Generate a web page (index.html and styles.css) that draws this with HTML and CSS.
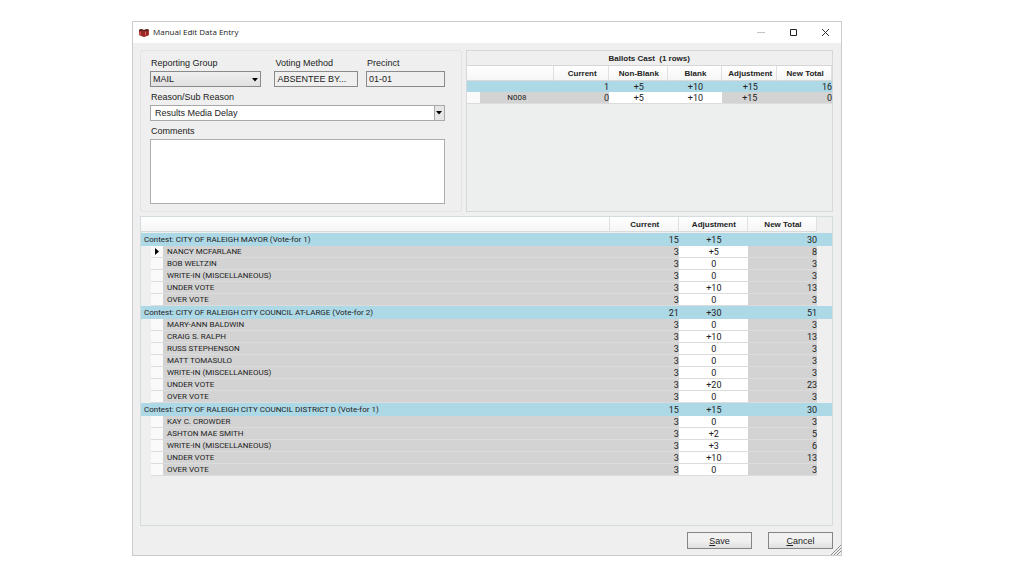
FILE: index.html
```html
<!DOCTYPE html>
<html lang="en">
<head>
<meta charset="utf-8">
<title>Manual Edit Data Entry</title>
<link rel="stylesheet" href="styles.css">
</head>
<body>
<main class="window">
  <header class="titlebar">
    <svg class="app-icon" width="10" height="9" viewBox="0 0 10 9" aria-hidden="true">
      <path d="M0 2l2-1 3 1 3-1 2 1v5l-2 1-3 1-3-1-2-1z" fill="#b5302f"/>
      <path d="M0 2l2-1 3 1 3-1 2 1v1H0z" fill="#4d2a28"/>
      <path d="M3 2v6M5 2v7M8 2v6" stroke="#7a2020" stroke-width="1"/>
      <path d="M1 4v3M6.500 4v3" stroke="#e0605a" stroke-width="1"/>
    </svg>
    <h1 class="title">Manual Edit Data Entry</h1>
    <button class="win-btn" aria-label="Minimize"><svg width="10" height="10" viewBox="0 0 10 10"><path d="M1 4.500h8" stroke="#c4c4c4" fill="none"/></svg></button>
    <button class="win-btn" aria-label="Maximize"><svg width="10" height="10" viewBox="0 0 10 10"><path d="M2.500 1.500h6v6h-6z" stroke="#222" fill="none"/></svg></button>
    <button class="win-btn" aria-label="Close"><svg width="10" height="10" viewBox="0 0 10 10"><path d="M2 1l7 7M9 1l-7 7" stroke="#333" fill="none"/></svg></button>
  </header>

  <div class="content">
    <div class="top">
      <form class="details">
        <div class="fields">
          <div class="field field-group">
            <label for="group">Reporting Group</label>
            <div class="combo">
              <select id="group" class="box box-raised"><option>MAIL</option></select>
              <svg class="arrow" width="6" height="4" viewBox="0 0 6 4" aria-hidden="true"><path d="M0 0h6L3 3.500z"/></svg>
            </div>
          </div>
          <div class="field field-method">
            <label for="method">Voting Method</label>
            <input id="method" class="box" type="text" value="ABSENTEE BY..." readonly>
          </div>
          <div class="field field-precinct">
            <label for="precinct">Precinct</label>
            <input id="precinct" class="box" type="text" value="01-01" readonly>
          </div>
        </div>
        <div class="field">
          <label for="reason">Reason/Sub Reason</label>
          <div class="combo">
            <select id="reason" class="box box-white"><option>Results Media Delay</option></select>
            <span class="drop"><svg width="6" height="4" viewBox="0 0 6 4" aria-hidden="true"><path d="M0 0h6L3 3.500z"/></svg></span>
          </div>
        </div>
        <div class="field field-comments">
          <label for="comments">Comments</label>
          <textarea id="comments" class="comments"></textarea>
        </div>
      </form>

      <section class="ballots">
        <table class="grid">
          <caption>Ballots Cast&nbsp; (1 rows)</caption>
          <colgroup><col class="c-mark"><col><col class="c-mid"><col class="c-mid-wide"><col class="c-mid"><col class="c-mid"><col class="c-mid"></colgroup>
          <thead><tr><th colspan="2"></th><th>Current</th><th>Non-Blank</th><th>Blank</th><th>Adjustment</th><th>New Total</th></tr></thead>
          <tbody>
            <tr class="sum"><td colspan="2"></td><td class="num">1</td><td class="mid">+5</td><td class="mid">+10</td><td class="mid">+15</td><td class="num">16</td></tr>
            <tr><td class="mark"></td><td class="precinct">N008</td><td class="num">0</td><td class="edit"><input aria-label="N008 non-blank" value="+5"></td><td class="edit"><input aria-label="N008 blank" value="+10"></td><td class="mid">+15</td><td class="num">0</td></tr>
          </tbody>
        </table>
      </section>
    </div>

    <section class="contests">
      <table class="grid">
        <colgroup><col class="c-indent"><col class="c-row"><col><col class="c-wide"><col class="c-wide"><col class="c-wide"><col class="c-tail"></colgroup>
        <thead><tr><th colspan="3"></th><th>Current</th><th>Adjustment</th><th>New Total</th><td class="blank"></td></tr></thead>
        <tbody>
          <tr class="sum"><th colspan="3" scope="rowgroup">Contest: CITY OF RALEIGH MAYOR (Vote-for 1)</th><td class="num">15</td><td class="mid">+15</td><td class="num">30</td><td></td></tr>
          <tr><td class="blank"></td><td class="mark"><svg width="4" height="7" viewBox="0 0 4 7" aria-hidden="true"><path d="M0 0l4 3.500L0 7z"/></svg></td><td>NANCY MCFARLANE</td><td class="num">3</td><td class="edit"><input aria-label="Nancy McFarlane adjustment" value="+5"></td><td class="num">8</td><td class="blank"></td></tr>
          <tr><td class="blank"></td><td class="mark"></td><td>BOB WELTZIN</td><td class="num">3</td><td class="edit"><input aria-label="Bob Weltzin adjustment" value="0"></td><td class="num">3</td><td class="blank"></td></tr>
          <tr><td class="blank"></td><td class="mark"></td><td>WRITE-IN (MISCELLANEOUS)</td><td class="num">3</td><td class="edit"><input aria-label="Mayor write-in adjustment" value="0"></td><td class="num">3</td><td class="blank"></td></tr>
          <tr><td class="blank"></td><td class="mark"></td><td>UNDER VOTE</td><td class="num">3</td><td class="edit"><input aria-label="Mayor under vote adjustment" value="+10"></td><td class="num">13</td><td class="blank"></td></tr>
          <tr><td class="blank"></td><td class="mark"></td><td>OVER VOTE</td><td class="num">3</td><td class="edit"><input aria-label="Mayor over vote adjustment" value="0"></td><td class="num">3</td><td class="blank"></td></tr>
        </tbody>
        <tbody>
          <tr class="sum"><th colspan="3" scope="rowgroup">Contest: CITY OF RALEIGH CITY COUNCIL AT-LARGE (Vote-for 2)</th><td class="num">21</td><td class="mid">+30</td><td class="num">51</td><td></td></tr>
          <tr><td class="blank"></td><td class="mark"></td><td>MARY-ANN BALDWIN</td><td class="num">3</td><td class="edit"><input aria-label="Mary-Ann Baldwin adjustment" value="0"></td><td class="num">3</td><td class="blank"></td></tr>
          <tr><td class="blank"></td><td class="mark"></td><td>CRAIG S. RALPH</td><td class="num">3</td><td class="edit"><input aria-label="Craig S. Ralph adjustment" value="+10"></td><td class="num">13</td><td class="blank"></td></tr>
          <tr><td class="blank"></td><td class="mark"></td><td>RUSS STEPHENSON</td><td class="num">3</td><td class="edit"><input aria-label="Russ Stephenson adjustment" value="0"></td><td class="num">3</td><td class="blank"></td></tr>
          <tr><td class="blank"></td><td class="mark"></td><td>MATT TOMASULO</td><td class="num">3</td><td class="edit"><input aria-label="Matt Tomasulo adjustment" value="0"></td><td class="num">3</td><td class="blank"></td></tr>
          <tr><td class="blank"></td><td class="mark"></td><td>WRITE-IN (MISCELLANEOUS)</td><td class="num">3</td><td class="edit"><input aria-label="At-large write-in adjustment" value="0"></td><td class="num">3</td><td class="blank"></td></tr>
          <tr><td class="blank"></td><td class="mark"></td><td>UNDER VOTE</td><td class="num">3</td><td class="edit"><input aria-label="At-large under vote adjustment" value="+20"></td><td class="num">23</td><td class="blank"></td></tr>
          <tr><td class="blank"></td><td class="mark"></td><td>OVER VOTE</td><td class="num">3</td><td class="edit"><input aria-label="At-large over vote adjustment" value="0"></td><td class="num">3</td><td class="blank"></td></tr>
        </tbody>
        <tbody>
          <tr class="sum"><th colspan="3" scope="rowgroup">Contest: CITY OF RALEIGH CITY COUNCIL DISTRICT D (Vote-for 1)</th><td class="num">15</td><td class="mid">+15</td><td class="num">30</td><td></td></tr>
          <tr><td class="blank"></td><td class="mark"></td><td>KAY C. CROWDER</td><td class="num">3</td><td class="edit"><input aria-label="Kay C. Crowder adjustment" value="0"></td><td class="num">3</td><td class="blank"></td></tr>
          <tr><td class="blank"></td><td class="mark"></td><td>ASHTON MAE SMITH</td><td class="num">3</td><td class="edit"><input aria-label="Ashton Mae Smith adjustment" value="+2"></td><td class="num">5</td><td class="blank"></td></tr>
          <tr><td class="blank"></td><td class="mark"></td><td>WRITE-IN (MISCELLANEOUS)</td><td class="num">3</td><td class="edit"><input aria-label="District D write-in adjustment" value="+3"></td><td class="num">6</td><td class="blank"></td></tr>
          <tr><td class="blank"></td><td class="mark"></td><td>UNDER VOTE</td><td class="num">3</td><td class="edit"><input aria-label="District D under vote adjustment" value="+10"></td><td class="num">13</td><td class="blank"></td></tr>
          <tr><td class="blank"></td><td class="mark"></td><td>OVER VOTE</td><td class="num">3</td><td class="edit"><input aria-label="District D over vote adjustment" value="0"></td><td class="num">3</td><td class="blank"></td></tr>
        </tbody>
      </table>
    </section>

    <footer class="actions">
      <button class="btn"><u>S</u>ave</button>
      <button class="btn"><u>C</u>ancel</button>
    </footer>
  </div>
  <svg class="grip" width="10" height="10" viewBox="0 0 10 10" aria-hidden="true"><path d="M0 10L10 0M3 10l7-7M6 10l4-4" stroke="#8c8c8c" fill="none"/></svg>
</main>
</body>
</html>
```
FILE: styles.css
```css
* { box-sizing: border-box; }

body {
  margin: 0;
  min-height: 100vh;
  display: flex;
  padding: 21px 182px 20px 132px;
  background: #fff;
  color: #222;
  font: 9px/12px "Liberation Sans", Arial, sans-serif;
}

input, select, textarea, button { font: inherit; color: inherit; margin: 0; border-radius: 0; }

.window {
  position: relative;
  flex: 1;
  display: flex;
  flex-direction: column;
  min-width: 0;
  border: 1px solid #cbcbcb;
  background: #efefef;
}

.titlebar {
  display: flex;
  align-items: center;
  height: 21px;
  padding: 0 0 0 6px;
  background: #fff;
}
.title { flex: 1; margin: 0 0 0 4px; font: 8px/12px "Open Sans", "Noto Sans", sans-serif; padding-bottom: 1px; }
.win-btn { display: flex; justify-content: center; align-items: center; width: 32px; height: 20px; padding: 0; border: 0; background: none; }

.content { flex: 1; display: flex; flex-direction: column; padding: 7px 8px 6px 7px; }

.top { display: grid; grid-template-columns: 7fr 8fr; gap: 4px; height: 162px; margin-bottom: 4px; }

.details {
  min-width: 0;
  display: flex;
  flex-direction: column;
  gap: 4px;
  padding: 6px 16px 7px 9px;
  border: 1px solid #e0e4e4;
  border-radius: 3px;
}
.fields { display: flex; }
.field { display: flex; flex-direction: column; gap: 2px; min-width: 0; }
.field label { padding-left: 1px; line-height: 12px; }
.field-group { flex: 112; margin-right: 13px; }
.field-method { flex: 84; margin-right: 8px; }
.field-precinct { flex: 79; }
.field-comments { flex: 1; }

.box {
  width: 100%;
  height: 16px;
  padding: 0 2px;
  border: 1px solid #8a8a8a;
  background: #efefef;
  appearance: none;
  outline: 0;
}
.box-raised { background: linear-gradient(#efefef, #e0e0e0); }
.box-white { background: #fff; border-color: #a8a8a8; padding-left: 4px; }
.combo { position: relative; display: flex; }
.arrow { position: absolute; right: 3px; top: 7px; }
.drop {
  position: absolute;
  right: 1px;
  top: 1px;
  bottom: 1px;
  width: 10px;
  display: flex;
  justify-content: center;
  align-items: center;
  border-left: 1px solid #a8a8a8;
  background: #e6e6e6;
  pointer-events: none;
}
.comments { flex: 1; width: 100%; padding: 2px; border: 1px solid #adadad; background: #fff; resize: none; outline: 0; }

.ballots { min-width: 0; border: 1px solid #d5d9dc; background: #edeeee; }
.contests { flex: 1; border: 1px solid #d5dcdf; background: #efefef; }

.grid { width: 100%; table-layout: fixed; border-collapse: separate; border-spacing: 0; font-size: 8px; line-height: 11px; }
.grid caption { height: 15px; line-height: 15px; font-weight: bold; background: #efefef; border-bottom: 1px solid #d5d5d5; }
.grid th, .grid td { padding: 0; white-space: nowrap; }
.grid thead th { height: 15px; padding-left: 2px; border-right: 1px solid #e0e0e0; border-bottom: 1px solid #dadada; background: linear-gradient(#fff, #f6f6f6); }
.grid tbody { font-family: Roboto, "Liberation Sans", sans-serif; }
.grid tbody td { height: 12px; padding-left: 4px; border-bottom: 1px solid #dcdcdc; background: #d3d3d3; }
.grid tbody .sum td, .grid tbody .sum th {
  height: 13px;
  padding-left: 3px;
  border: 0;
  background: #add8e6;
  font-weight: normal;
  text-align: left;
}
.grid tbody td.num, .grid tbody td.mid, .grid tbody td.edit { font-size: 9px; line-height: 10px; padding: 1px 0 0; }
.grid tbody td.num { text-align: right; }
.grid tbody td.mid { text-align: center; }
.grid tbody td.edit { padding-left: 1px; background: #fff; }
.grid tbody td.precinct { padding: 0; text-align: center; }
.grid tbody td.mark { padding: 0; text-align: center; background: #fafafa; }
.grid tbody td.blank { border: 0; background: none; }
.mark svg { display: block; margin: 0 auto; }
.edit input { display: block; width: 100%; height: 10px; padding: 0; border: 0; background: none; text-align: center; outline: 0; }

.c-mark { width: 13px; }
.c-mid { width: 15%; }
.c-mid-wide { width: 16%; }
.c-indent { width: 10px; }
.c-row { width: 12px; }
.c-wide { width: 10%; }
.c-tail { width: 15px; }

.contests tbody:first-of-type::before { content: ""; display: table-row; height: 1px; }
.grid tbody .sum td.num { text-align: right; padding-left: 0; }
.grid tbody .sum td.mid { text-align: center; padding-left: 1px; }
.ballots .grid tbody .sum td { height: 11px; }

.actions { display: flex; justify-content: flex-end; gap: 16px; padding-top: 6px; }
.btn { width: 65px; height: 17px; padding: 0; border: 1px solid #858585; background: linear-gradient(#f1f1f1 50%, #dfdfdf); }

.grip { position: absolute; right: 0; bottom: 0; }
```
